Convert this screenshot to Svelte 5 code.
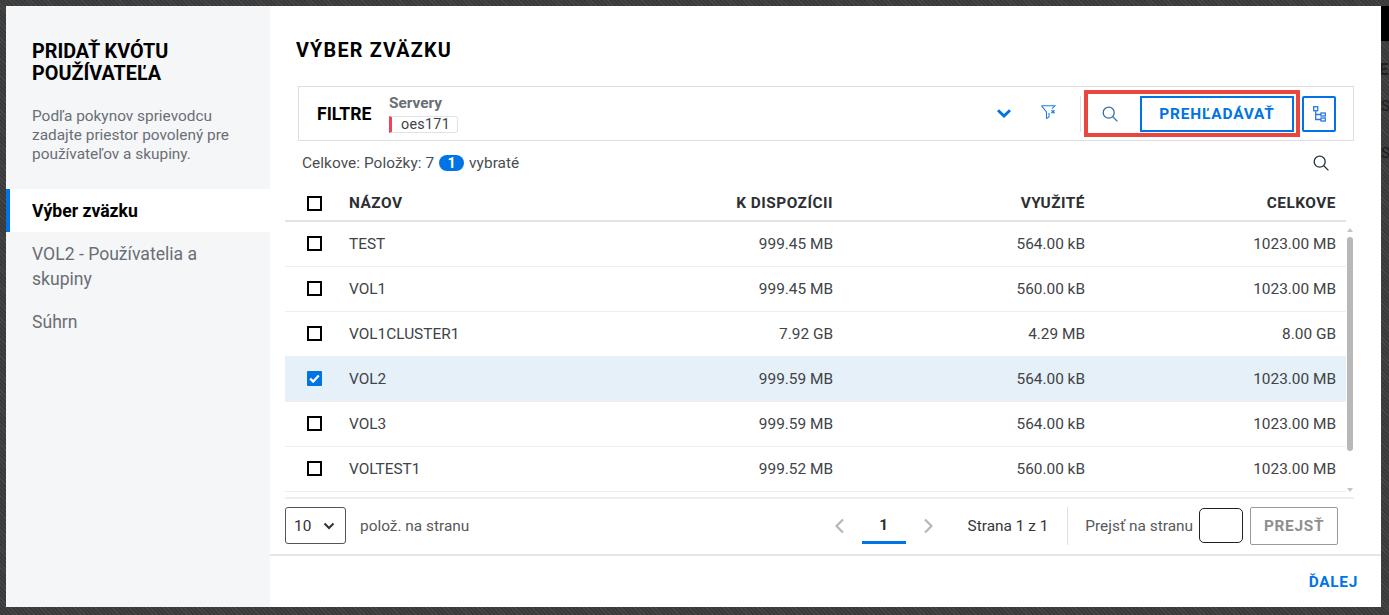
<script>
  const rows = [
    { name: 'TEST', free: '999.45 MB', used: '564.00 kB', total: '1023.00 MB' },
    { name: 'VOL1', free: '999.45 MB', used: '560.00 kB', total: '1023.00 MB' },
    { name: 'VOL1CLUSTER1', free: '7.92 GB', used: '4.29 MB', total: '8.00 GB' },
    { name: 'VOL2', free: '999.59 MB', used: '564.00 kB', total: '1023.00 MB', selected: true },
    { name: 'VOL3', free: '999.59 MB', used: '564.00 kB', total: '1023.00 MB' },
    { name: 'VOLTEST1', free: '999.52 MB', used: '560.00 kB', total: '1023.00 MB' },
  ];
</script>

<div class="backdrop">
  <div class="dialog">
    <aside class="side">
      <div class="side-head">
        <h1>PRIDAŤ KVÓTU POUŽÍVATEĽA</h1>
        <p>Podľa pokynov sprievodcu zadajte priestor povolený pre používateľov a skupiny.</p>
      </div>
      <nav>
        <div class="step active">Výber zväzku</div>
        <div class="step">VOL2 - Používatelia a skupiny</div>
        <div class="step">Súhrn</div>
      </nav>
    </aside>

    <main class="main">
      <div class="content">
        <h2>VÝBER ZVÄZKU</h2>

        <div class="filters">
          <span class="filters-label">FILTRE</span>
          <div class="filter-group">
            <span class="filter-name">Servery</span>
            <span class="chip">oes171</span>
          </div>
          <svg class="chevron" width="14" height="9" viewBox="0 0 14 9"><path d="M1 1.300L7 7l6-5.700" fill="none" stroke="#0073e7" stroke-width="2.800"/></svg>
          <svg class="funnel" width="15" height="14" viewBox="0 0 15 14" fill="none" stroke="#1f7fe6" stroke-width="1.100"><path d="M.5.800h13.500l-3 2.800M.5.800L5.500 7v6.400L8 12V8"/><path d="M10.500 5.300l3 3m0-3l-3 3" stroke-width="1.300"/></svg>
          <span class="divider"></span>
          <div class="search-box">
            <svg class="glass" width="16" height="16" viewBox="0 0 16 16" fill="none" stroke="#2f6fa8" stroke-width="1.300"><circle cx="6.700" cy="6.700" r="5.500"/><path d="M10.800 10.800l4.600 4.600"/></svg>
            <button class="browse">PREHĽADÁVAŤ</button>
          </div>
          <button class="tree" aria-label="Strom">
            <svg width="13" height="16" viewBox="0 0 13 16" fill="none" stroke="#2a78e4" stroke-width="1.300"><rect x=".7" y=".7" width="4" height="4"/><rect x="8" y="7" width="4.300" height="3"/><rect x="8" y="12" width="4.300" height="3"/><path d="M2.700 4.700v8.800H8M2.700 8.500H8"/></svg>
          </button>
        </div>

        <div class="summary">
          <span>Celkove: Položky: 7</span>
          <span class="badge">1</span>
          <span>vybraté</span>
          <svg class="summary-search" width="16" height="16" viewBox="0 0 16 16" fill="none" stroke="#26323d" stroke-width="1.300"><circle cx="6.700" cy="6.700" r="5.500"/><path d="M10.800 10.800l4.600 4.600"/></svg>
        </div>

        <div class="table">
          <div class="row head">
            <span class="cb"></span>
            <span>NÁZOV</span>
            <span class="num">K DISPOZÍCII</span>
            <span class="num">VYUŽITÉ</span>
            <span class="num">CELKOVE</span>
          </div>
          <div class="body">
            <div class="rows">
              {#each rows as row}
                <div class="row" class:selected={row.selected}>
                  <span class="cb" class:checked={row.selected}>
                    {#if row.selected}
                      <svg width="11" height="9" viewBox="0 0 11 9"><path d="M1.200 4.600l3 3 5.600-6.200" fill="none" stroke="#fff" stroke-width="2.200"/></svg>
                    {/if}
                  </span>
                  <span>{row.name}</span>
                  <span class="num">{row.free}</span>
                  <span class="num">{row.used}</span>
                  <span class="num">{row.total}</span>
                </div>
              {/each}
            </div>
            <div class="scrollbar">
              <i class="arrow up"></i>
              <i class="thumb"></i>
              <i class="arrow down"></i>
            </div>
          </div>
        </div>

        <div class="pager">
          <div class="select">
            <span>10</span>
            <svg width="12" height="8" viewBox="0 0 12 8"><path d="M1.500 1.500L6 6l4.500-4.500" fill="none" stroke="#333" stroke-width="2"/></svg>
          </div>
          <span class="per-page">polož. na stranu</span>
          <div class="pages">
            <svg width="11" height="16" viewBox="0 0 11 16"><path d="M9 1.500L2.500 8 9 14.500" fill="none" stroke="#b5b7ba" stroke-width="2.200"/></svg>
            <span class="current">1</span>
            <svg width="11" height="16" viewBox="0 0 11 16"><path d="M2 1.500L8.500 8 2 14.500" fill="none" stroke="#b5b7ba" stroke-width="2.200"/></svg>
          </div>
          <span class="page-of">Strana 1 z 1</span>
          <span class="pager-divider"></span>
          <span class="goto-label">Prejsť na stranu</span>
          <span class="goto-input"></span>
          <button class="goto">PREJSŤ</button>
        </div>
      </div>

      <footer>
        <button class="next">ĎALEJ</button>
      </footer>
    </main>
  </div>

  <!-- page behind the dialog, only a sliver is visible -->
  <div class="behind">
    <div class="behind-bar"></div>
    <span class="ghost title">EP</span>
    <span class="ghost s1">S</span>
    <span class="ghost s2">S</span>
  </div>
</div>

<style>
  :global(body) {
    margin: 0;
    font-family: Roboto, "Liberation Sans", sans-serif;
  }

  button {
    font-family: inherit;
    background: none;
    cursor: pointer;
  }

  .backdrop {
    display: flex;
    height: 615px;
    box-sizing: border-box;
    padding: 6px 0 8px 6px;
    background: repeating-linear-gradient(45deg, #474747 0 1px, #3a3a3a 1px 3px);
    overflow: hidden;
  }

  .dialog {
    display: flex;
    width: 1375px;
    flex: none;
    height: 601px;
    background: #fff;
  }

  .behind {
    position: relative;
    flex: 1;
    overflow: hidden;
  }

  .behind-bar {
    height: 35px;
    background: #000;
  }

  .ghost {
    position: absolute;
    left: 0;
    font-size: 15px;
    line-height: 18px;
    color: #1c1c1c;
  }

  .ghost.title {
    top: 54px;
    left: -2px;
    font-size: 17px;
    font-weight: 700;
    color: #241e22;
  }

  .ghost.s1 {
    top: 91px;
  }

  .ghost.s2 {
    top: 138px;
  }

  .side {
    width: 264px;
    flex: none;
    background: #f5f6f8;
  }

  .side-head {
    height: 183px;
    box-sizing: border-box;
    padding: 35px 26px 0;
  }

  h1 {
    margin: 0;
    font-size: 19.800px;
    line-height: 22px;
    font-weight: 700;
    color: #000;
  }

  .side-head p {
    margin: 22px 0 0;
    font-size: 15.400px;
    line-height: 19px;
    color: #6a6e75;
  }

  .step {
    padding: 10px 26px 8px;
    font-size: 17.600px;
    line-height: 25px;
    color: #6a6e75;
  }

  .step.active {
    padding: 10px 22px 8px;
    border-left: 4px solid #0073e7;
    background: #fff;
    font-weight: 700;
    color: #000;
  }

  .main {
    flex: 1;
    min-width: 0;
    display: flex;
    flex-direction: column;
  }

  .content {
    flex: 1;
    padding: 0 35px 0 15px;
    border-bottom: 2px solid #e6e6e6;
  }

  h2 {
    margin: 0;
    padding: 34px 0 0 11px;
    font-size: 19.800px;
    line-height: 22px;
    font-weight: 700;
    letter-spacing: 1.200px;
    color: #000;
  }

  .filters {
    display: flex;
    align-items: center;
    height: 55px;
    box-sizing: border-box;
    margin: 24px -8px 0 13px;
    padding: 0 17px 0 18px;
    border: 1px solid #dedede;
  }

  .filters-label {
    width: 72px;
    font-size: 17.600px;
    font-weight: 700;
    color: #000;
  }

  .filter-group {
    display: flex;
    flex-direction: column;
    align-items: flex-start;
    flex: 1;
  }

  .filter-name {
    font-size: 15.400px;
    line-height: 18px;
    font-weight: 700;
    color: #6a6e75;
  }

  .chip {
    box-sizing: border-box;
    width: 69px;
    height: 17px;
    margin-top: 4px;
    padding-left: 9px;
    border: 1px solid #e2e2e2;
    border-left: 3px solid #ee4455;
    border-radius: 0 3px 3px 0;
    font-size: 14.300px;
    line-height: 15px;
    letter-spacing: 0.300px;
    color: #3f4246;
  }

  .chevron {
    margin-right: 30px;
  }

  .funnel {
    margin: -3px 24px 0 0;
  }

  .divider {
    width: 1px;
    height: 36px;
    margin-right: 3px;
    background: #e0e0e0;
  }

  .search-box {
    display: flex;
    align-items: center;
    box-sizing: border-box;
    width: 216px;
    height: 47px;
    padding: 0 2px 0 14px;
    border: 4px solid #e8473f;
  }

  .browse {
    width: 154px;
    height: 36px;
    margin-left: auto;
    padding: 0;
    border: 2px solid #0073e7;
    font-size: 15.400px;
    font-weight: 700;
    letter-spacing: 0.850px;
    color: #0073e7;
  }

  .tree {
    display: flex;
    align-items: center;
    justify-content: center;
    width: 34px;
    height: 36px;
    margin-left: 2px;
    padding: 0;
    border: 2px solid #0073e7;
    border-radius: 2px;
  }

  .summary {
    display: flex;
    align-items: center;
    gap: 5px;
    height: 44px;
    padding-left: 17px;
    font-size: 15.400px;
    letter-spacing: 0.050px;
    color: #4a4d52;
  }

  .badge {
    width: 25px;
    height: 16px;
    border-radius: 8px;
    background: #0073e7;
    color: #fff;
    font-size: 14.300px;
    line-height: 16px;
    font-weight: 700;
    text-align: center;
  }

  .summary-search {
    margin-left: auto;
    margin-right: 17px;
  }

  .table {
    margin-right: -8px;
  }

  .row {
    display: grid;
    grid-template-columns: 64px 1fr 200px 252px 251px;
    align-items: center;
    box-sizing: border-box;
    height: 45px;
    padding-right: 10px;
    border-bottom: 1px solid #eeeeee;
    font-size: 15.400px;
    color: #404347;
  }

  .row.head {
    width: 1061px;
    height: 37px;
    border-bottom: 2px solid #e3e3e3;
    font-weight: 700;
    letter-spacing: 0.500px;
    color: #2d2f33;
  }

  .row.selected {
    background: #e5f0f8;
  }

  .num {
    text-align: right;
  }

  .cb {
    display: flex;
    align-items: center;
    justify-content: center;
    box-sizing: border-box;
    width: 15px;
    height: 15px;
    margin: 0 0 2px 22px;
    border: 2px solid #000;
  }

  .head .cb {
    margin: 2px 0 0 22px;
  }

  .cb.checked {
    border: none;
    border-radius: 1px;
    background: #0073e7;
  }

  .body {
    display: flex;
    height: 275px;
    border-bottom: 2px solid #eeeeee;
  }

  .rows {
    width: 1061px;
  }

  .scrollbar {
    position: relative;
    flex: 1;
    background: #fff;
  }

  .thumb {
    position: absolute;
    top: 15px;
    left: 1px;
    width: 6px;
    height: 214px;
    border-radius: 3px;
    background: #b8b8b8;
  }

  .arrow {
    position: absolute;
    left: 1px;
    border: 3px solid transparent;
  }

  .arrow.up {
    top: 3px;
    border-bottom: 4px solid #c4c4c4;
  }

  .arrow.down {
    top: 266px;
    border-top: 4px solid #c4c4c4;
  }

  .pager {
    display: flex;
    align-items: center;
    box-sizing: border-box;
    height: 55px;
    padding-bottom: 2px;
    font-size: 15.400px;
    color: #55585c;
  }

  .select {
    display: flex;
    align-items: center;
    justify-content: space-between;
    box-sizing: border-box;
    width: 61px;
    height: 37px;
    padding: 0 10px 0 8px;
    border: 1px solid #555;
    border-radius: 3px;
    color: #333;
  }

  .per-page {
    margin-left: 14px;
  }

  .pages {
    display: flex;
    align-items: center;
    margin-left: auto;
    margin-right: 34px;
  }

  .current {
    width: 44px;
    margin: 0 17px;
    padding-top: 8px;
    padding-bottom: 7px;
    border-bottom: 3px solid #0073e7;
    font-weight: 700;
    color: #2d2f33;
    text-align: center;
  }

  .page-of {
    color: #33363a;
  }

  .pager-divider {
    width: 1px;
    height: 38px;
    margin: 0 17px 0 19px;
    background: #e0e0e0;
  }

  .goto-input {
    box-sizing: border-box;
    width: 44px;
    height: 35px;
    margin-left: 6px;
    border: 1px solid #222;
    border-radius: 5px;
  }

  .goto {
    width: 88px;
    height: 38px;
    margin-left: 7px;
    margin-right: 8px;
    padding: 0;
    border: 1px solid #9a9a9a;
    border-radius: 2px;
    font-size: 15.400px;
    font-weight: 700;
    letter-spacing: 0.700px;
    color: #8f8f8f;
  }

  footer {
    display: flex;
    justify-content: flex-end;
    align-items: center;
    height: 52px;
    padding-right: 23px;
  }

  .next {
    padding: 0;
    border: none;
    font-size: 15.400px;
    font-weight: 700;
    letter-spacing: 0.700px;
    color: #0073e7;
  }
</style>
